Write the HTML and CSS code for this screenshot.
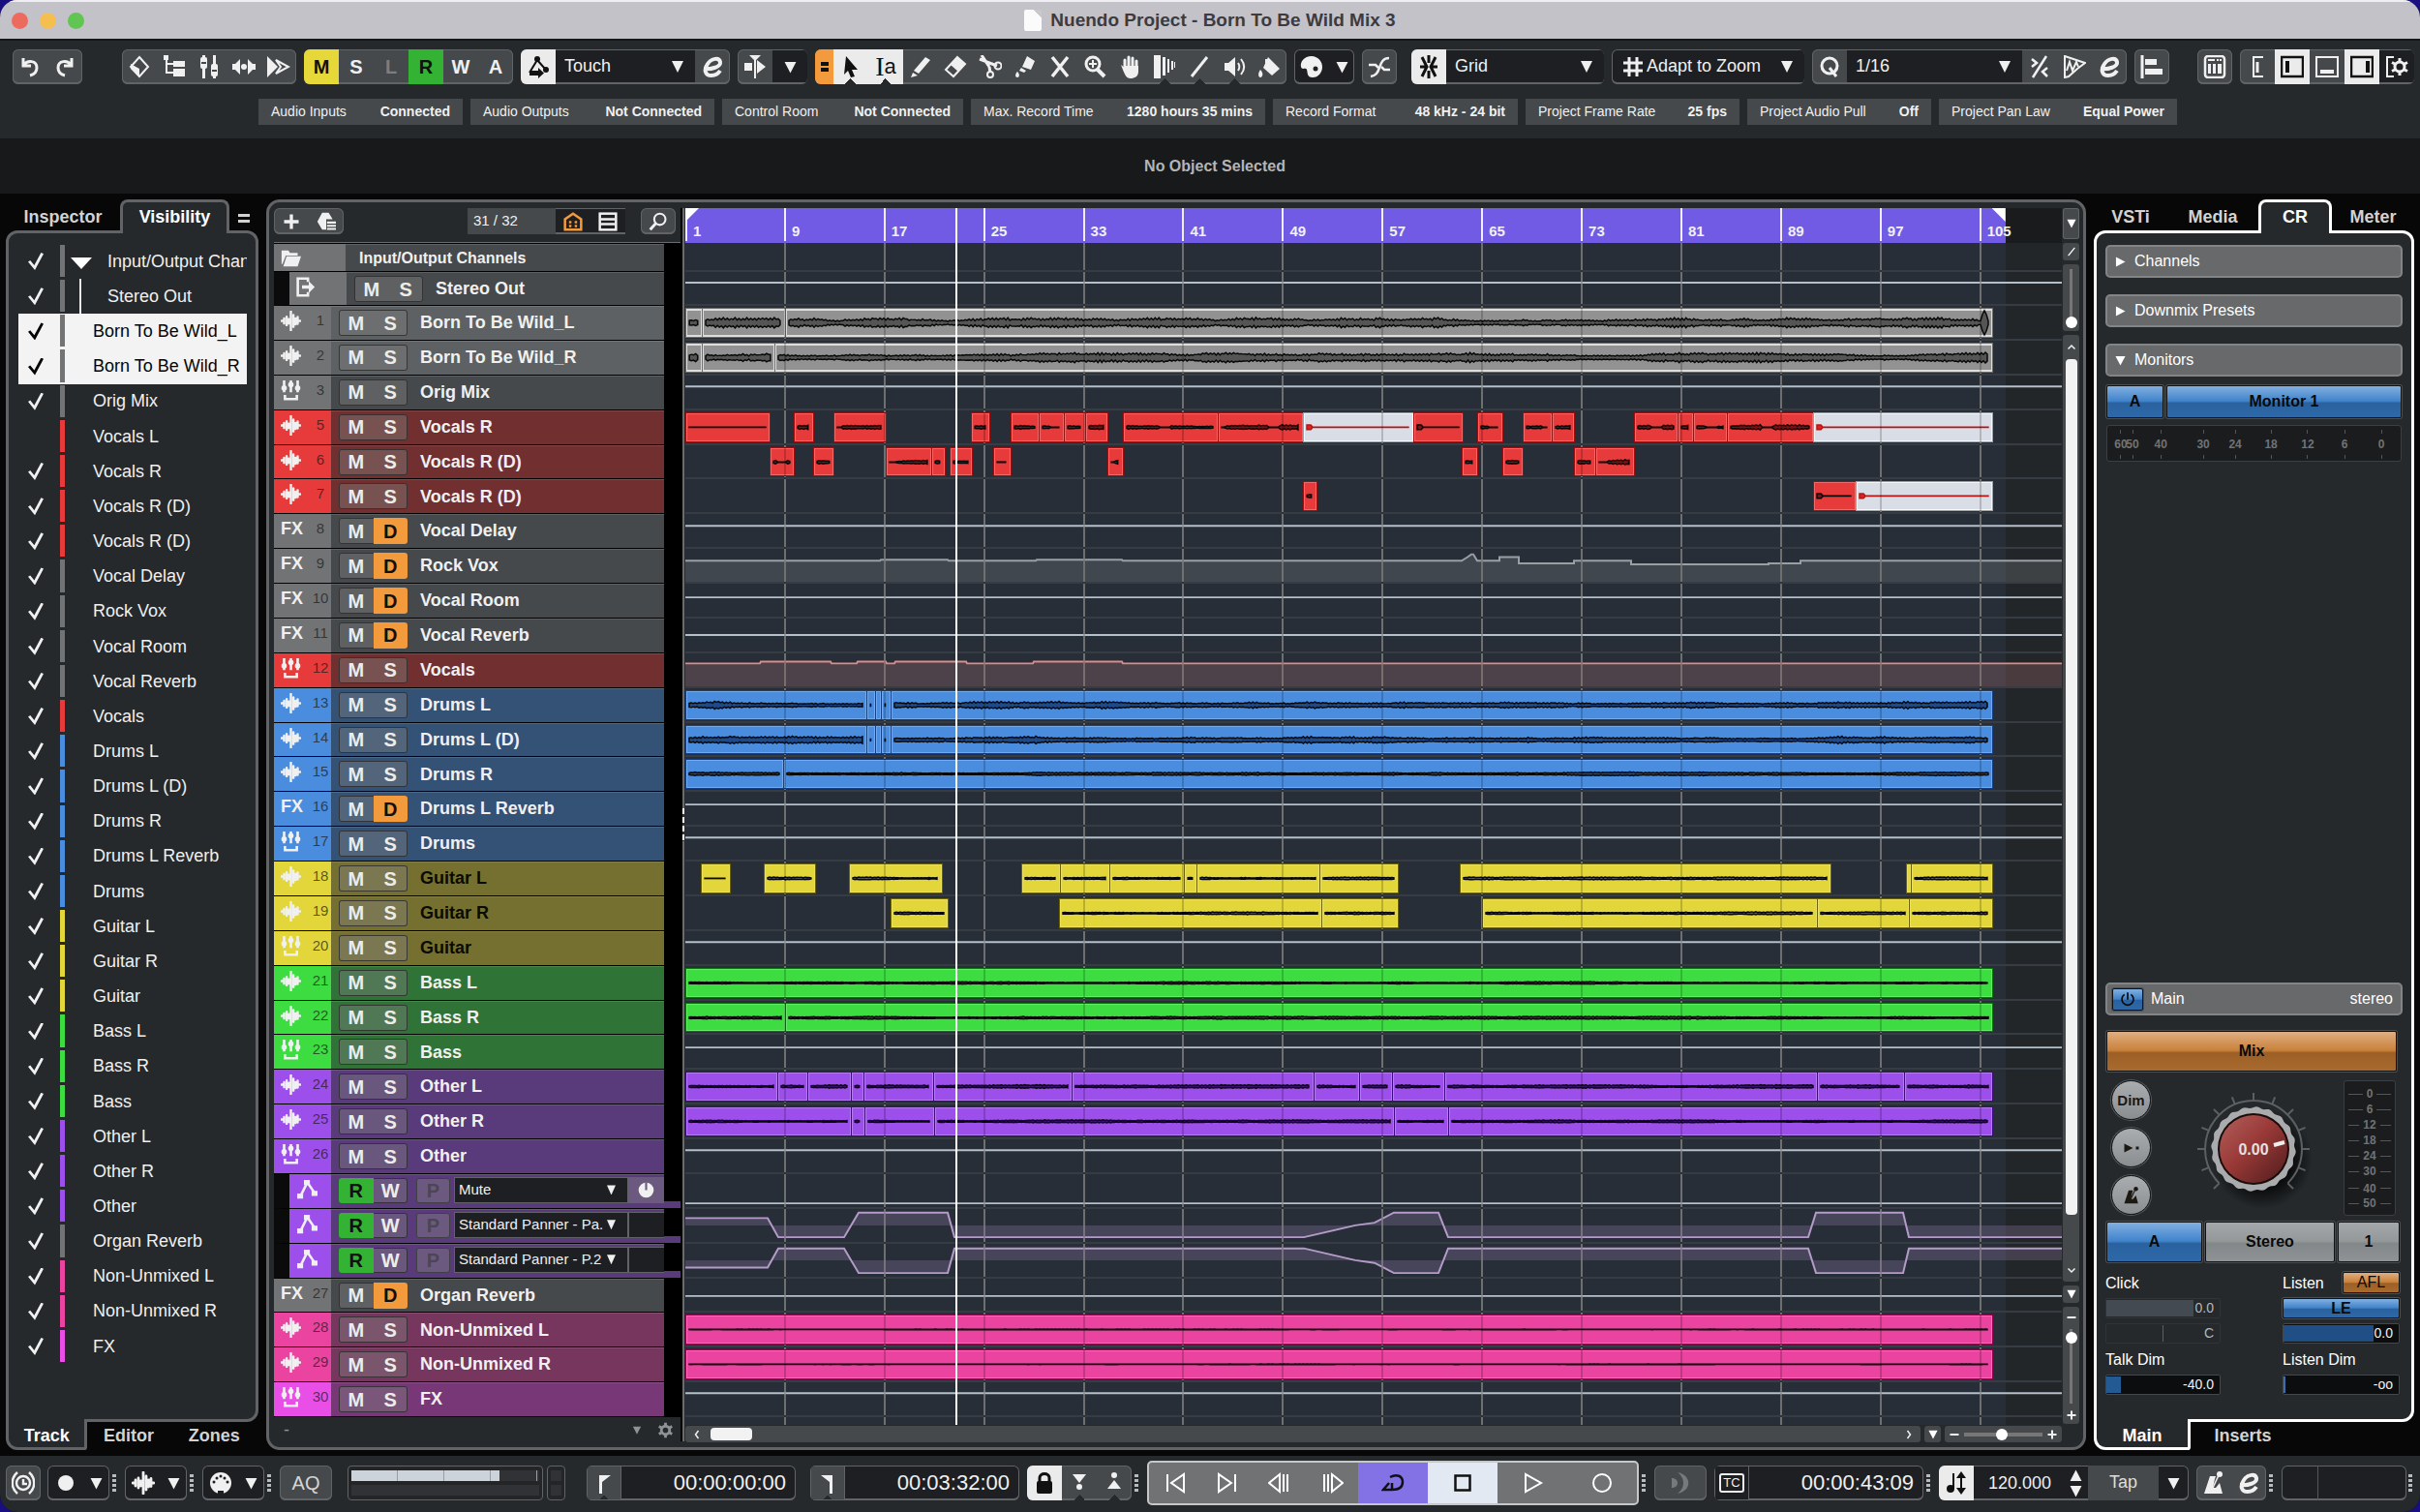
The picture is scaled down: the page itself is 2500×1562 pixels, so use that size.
FILE: index.html
```html
<!DOCTYPE html>
<html lang="en">
<head>
<meta charset="utf-8">
<title>Nuendo Project - Born To Be Wild Mix 3</title>
<link rel="stylesheet" href="styles.css">
</head>
<body>
<svg class="sprite" aria-hidden="true">
  <symbol id="i-undo" viewBox="0 0 24 24"><path d="M5 3v8h8M6 10C9 5 19 5 19 13c0 5-3 7-7 8" fill="none" stroke="currentColor" stroke-width="3"/></symbol>
  <symbol id="i-redo" viewBox="0 0 24 24"><path d="M19 3v8h-8M18 10C15 5 5 5 5 13c0 5 3 7 7 8" fill="none" stroke="currentColor" stroke-width="3"/></symbol>
  <symbol id="i-delay" viewBox="0 0 24 24"><path d="M12 2l9 10-9 10-9-10z" fill="none" stroke="currentColor" stroke-width="2"/><path d="M3 9l9 5v9L3 14z" fill="currentColor"/></symbol>
  <symbol id="i-tree" viewBox="0 0 24 24"><path d="M1 0h5v5H1zM11 6h12v6H11zM11 14h12v8H11z" fill="currentColor"/><path d="M4 3v15h8M4 9h8" fill="none" stroke="currentColor" stroke-width="2"/></symbol>
  <symbol id="i-mixer" viewBox="0 0 24 24"><path d="M5 0h3v24H5zM16 0h3v24h-3z" fill="currentColor"/><rect x="3" y="2" width="7" height="12" rx="2" fill="currentColor"/><rect x="14" y="9" width="7" height="13" rx="2" fill="currentColor"/><path d="M4 8h5M15 16h5" stroke="#45494b" stroke-width="2"/></symbol>
  <symbol id="i-center" viewBox="0 0 24 24"><path d="M-1 9h4l5-5v16l-5-5h-4zM25 9h-4l-5-5v16l5-5h4z" fill="currentColor"/><circle cx="12" cy="12" r="3" fill="currentColor"/></symbol>
  <symbol id="i-ff" viewBox="0 0 24 24"><path d="M0 1l11 11L0 23z" fill="currentColor"/><path d="M9 5l13 7-13 7 5-7z" fill="none" stroke="currentColor" stroke-width="2"/></symbol>
  <symbol id="i-autom" viewBox="0 0 24 24"><path d="M3 18L11 5l8 9" fill="none" stroke="currentColor" stroke-width="2"/><circle cx="11" cy="4" r="3" fill="currentColor"/><circle cx="20" cy="15" r="3" fill="currentColor"/><path d="M3 16h9v-3l6 5.500-6 5.500v-3H3z" fill="currentColor"/></symbol>
  <symbol id="i-edit" viewBox="0 0 24 24"><path d="M3 14c8 1 18-2 17-7-1-5-9-4-13 2-4 6-3 12 4 12 4 0 7-2 9-5" fill="none" stroke="currentColor" stroke-width="4"/></symbol>
  <symbol id="i-scroll" viewBox="0 0 24 24"><path d="M1 8h8v8H1zM14 5l9 7-9 7zM6 0h12l-6 6z" fill="currentColor"/><path d="M12 0v24" stroke="currentColor" stroke-width="2"/></symbol>
  <symbol id="i-arrow" viewBox="0 0 24 24"><path d="M7 1l12 14h-6l3 7-4 1-3-7-4 4z" fill="currentColor"/></symbol>
  <symbol id="i-pencil" viewBox="0 0 24 24"><path d="M17 2l5 3L10 19l-5-3zM4 18l5 3-7 2z" fill="currentColor"/></symbol>
  <symbol id="i-erase" viewBox="0 0 24 24"><path d="M14 2l8 7L10 22 2 15z" fill="none" stroke="currentColor" stroke-width="2"/><path d="M14 2l8 7-7 8-8-7z" fill="currentColor"/></symbol>
  <symbol id="i-scissors" viewBox="0 0 24 24"><path d="M3 0l8 12M1 4l18 7M11 12l1 6" stroke="currentColor" stroke-width="3"/><circle cx="20" cy="11" r="3.500" fill="none" stroke="currentColor" stroke-width="2"/><circle cx="12" cy="20" r="3" fill="none" stroke="currentColor" stroke-width="2"/></symbol>
  <symbol id="i-glue" viewBox="0 0 24 24"><path d="M14 1l8 5-4 9-9-3zM8 13l5 3-2 2-5-2zM4 17c3 3 2 6 0 6s-3-3 0-6z" fill="currentColor"/></symbol>
  <symbol id="i-x" viewBox="0 0 24 24"><path d="M4 2l16 20M20 2L4 22" stroke="currentColor" stroke-width="3.500"/></symbol>
  <symbol id="i-zoom" viewBox="0 0 24 24"><circle cx="10" cy="9" r="7" fill="none" stroke="currentColor" stroke-width="3"/><path d="M15 15l7 7" stroke="currentColor" stroke-width="4"/><path d="M6 9h8M10 5v8" stroke="currentColor" stroke-width="2"/></symbol>
  <symbol id="i-hand" viewBox="0 0 24 24"><path d="M7 13V5M11 12V2M15 12V3M19 13V6" stroke="currentColor" stroke-width="3" stroke-linecap="round"/><path d="M3 10l4 3V11h14v6c0 5-4 7-8 7-5 0-6-4-10-14z" fill="currentColor"/></symbol>
  <symbol id="i-comp" viewBox="0 0 24 24"><path d="M1 0h7v24H1zM10 2h3v19h-3zM15 4h2v14h-2zM19 6h2v9h-2zM22 7h1v6h-1z" fill="currentColor"/></symbol>
  <symbol id="i-line" viewBox="0 0 24 24"><path d="M4 22L20 2" stroke="currentColor" stroke-width="3"/></symbol>
  <symbol id="i-speaker" viewBox="0 0 24 24"><path d="M2 8h4l7-6v20l-7-6H2z" fill="currentColor"/><path d="M16 8c2 3 2 5 0 8M19 4c4 5 4 11 0 16" fill="none" stroke="currentColor" stroke-width="2"/></symbol>
  <symbol id="i-fill" viewBox="0 0 24 24"><path d="M11 2l12 12-8 7-9-8z" fill="currentColor"/><path d="M9 4v8" stroke="currentColor" stroke-width="2"/><path d="M3 15c4 4 2 8 0 8s-3-4 0-8z" fill="currentColor"/></symbol>
  <symbol id="i-palette" viewBox="0 0 24 24"><path d="M12 1C4 1 0 7 1 12c1 4 5 0 6 3s0 8 6 8c6 0 10-5 10-11S18 1 12 1z" fill="currentColor"/><circle cx="16" cy="14" r="2.500" fill="#1d1f22"/></symbol>
  <symbol id="i-xfade" viewBox="0 0 24 24"><path d="M3 22c5-1 7-3 9-9s4-10 10-10" fill="none" stroke="currentColor" stroke-width="2.500"/><path d="M1 10h7l3 3M23 15h-6l-3-3" stroke="currentColor" stroke-width="2.500" fill="none"/></symbol>
  <symbol id="i-snap" viewBox="0 0 24 24"><path d="M5 2l5 10-5 10M19 2l-5 10 5 10M12 0v8M12 16v8M3 12h6M15 12h6" fill="none" stroke="currentColor" stroke-width="3"/></symbol>
  <symbol id="i-hash" viewBox="0 0 24 24"><path d="M8 2v20M16 2v20M2 8h20M2 16h20" stroke="currentColor" stroke-width="3"/></symbol>
  <symbol id="i-q" viewBox="0 0 24 24"><circle cx="12" cy="11" r="8" fill="none" stroke="currentColor" stroke-width="3"/><path d="M12 13l7 9" stroke="currentColor" stroke-width="3"/></symbol>
  <symbol id="i-iq" viewBox="0 0 24 24"><path d="M19 1L5 23M4 4l5 4-5 4M20 13l-5 4 5 5" fill="none" stroke="currentColor" stroke-width="2.500"/></symbol>
  <symbol id="i-aq" viewBox="0 0 24 24"><path d="M2 1l21 7-8 6-9 8-4 1z" fill="none" stroke="currentColor" stroke-width="2"/><path d="M4 16l3-9 3 9 4-9 2 5" fill="none" stroke="currentColor" stroke-width="2"/></symbol>
  <symbol id="i-align" viewBox="0 0 24 24"><path d="M2 0v24" stroke="currentColor" stroke-width="3"/><path d="M5 4h12v6H5zM5 14h18v6H5z" fill="currentColor"/></symbol>
  <symbol id="i-keys" viewBox="0 0 24 24"><rect x="2" y="1" width="20" height="22" rx="3" fill="none" stroke="currentColor" stroke-width="2.500"/><path d="M5 9h3v10H5zM10 9h3v10h-3zM15 9h4v10h-4zM5 4h7v2H5zM14 4h2v2h-2zM17 4h2v2h-2z" fill="currentColor"/></symbol>
  <symbol id="i-zl" viewBox="0 0 24 24"><path d="M18 2H8v20h10" fill="none" stroke="currentColor" stroke-width="2"/><path d="M12 7v11" stroke="currentColor" stroke-width="3"/></symbol>
  <symbol id="i-zleft" viewBox="0 0 24 24"><rect x="1" y="2" width="22" height="20" fill="none" stroke="currentColor" stroke-width="2.500"/><path d="M7 6v12" stroke="currentColor" stroke-width="4"/></symbol>
  <symbol id="i-zbot" viewBox="0 0 24 24"><rect x="1" y="2" width="22" height="20" fill="none" stroke="currentColor" stroke-width="2"/><path d="M5 17h14" stroke="currentColor" stroke-width="4"/></symbol>
  <symbol id="i-zright" viewBox="0 0 24 24"><rect x="1" y="2" width="22" height="20" fill="none" stroke="currentColor" stroke-width="2.500"/><path d="M18 6v12" stroke="currentColor" stroke-width="4"/></symbol>
  <symbol id="i-gear" viewBox="0 0 24 24"><circle cx="12" cy="12" r="6" fill="none" stroke="currentColor" stroke-width="4"/><path d="M12 1v4M12 19v4M2.500 6.500L6 8.500M18 15.500l3.500 2M2.500 17.500L6 15.500M18 8.500l3.500-2" stroke="currentColor" stroke-width="4"/></symbol>
  <symbol id="i-zgear" viewBox="0 0 24 24"><path d="M9 2H2v20h7" fill="none" stroke="currentColor" stroke-width="2"/><circle cx="15" cy="12" r="5" fill="none" stroke="currentColor" stroke-width="3"/><path d="M15 3v4M15 17v4M7 7.500l4 2M19 14.500l4 2M7 16.500l4-2M19 9.500l4-2" stroke="currentColor" stroke-width="3"/></symbol>
  <symbol id="i-wave" viewBox="0 0 24 24"><path d="M1 12h2M4 9v6M7 7v10M9.500 10v5M12 1v22M15 5v14M17.500 9v7M20 7.500v8M21 12h2" fill="none" stroke="currentColor" stroke-width="2.800" stroke-linecap="round"/></symbol>
  <symbol id="i-group" viewBox="0 0 24 24"><path d="M4 0v14M12 0v14M20 0v14" stroke="currentColor" stroke-width="3"/><circle cx="4" cy="9" r="3.200" fill="currentColor"/><circle cx="12" cy="5" r="3.200" fill="currentColor"/><circle cx="20" cy="9" r="3.200" fill="currentColor"/><path d="M5 17v5h14v-5" fill="none" stroke="currentColor" stroke-width="3"/></symbol>
  <symbol id="i-folder" viewBox="0 0 24 24"><path d="M1 3h8l2 3h9v3H6L2 19H1z" fill="currentColor"/><path d="M7 10h17l-4 12H3z" fill="currentColor"/></symbol>
  <symbol id="i-out" viewBox="0 0 24 24"><path d="M15 6V2H3v20h12v-4" fill="none" stroke="currentColor" stroke-width="3"/><path d="M8 10h8V5l7 7-7 7v-5H8z" fill="currentColor"/></symbol>
  <symbol id="i-curve" viewBox="0 0 24 24"><path d="M4 20L12 4l9 13" fill="none" stroke="currentColor" stroke-width="3"/><path d="M0 17h7v6H0zM8 1h7v6H8zM17 14h7v6h-7z" fill="currentColor"/></symbol>
  <symbol id="i-plus" viewBox="0 0 24 24"><path d="M12 3v18M3 12h18" stroke="currentColor" stroke-width="4"/></symbol>
  <symbol id="i-minus" viewBox="0 0 24 24"><path d="M3 12h18" stroke="currentColor" stroke-width="4"/></symbol>
  <symbol id="i-preset" viewBox="0 0 24 24"><path d="M7 1h8l5 8h-8v13H7L1 12z" fill="currentColor"/><path d="M13 13h11M13 17h11M13 21h11" stroke="currentColor" stroke-width="2.500"/></symbol>
  <symbol id="i-home" viewBox="0 0 24 24"><path d="M2 22V9l10-7 10 7v13z" fill="none" stroke="currentColor" stroke-width="3"/><path d="M7 11h3v3H7zM14 11h3v3h-3zM7 16h3v3H7zM14 16h3v3h-3z" fill="currentColor"/></symbol>
  <symbol id="i-list" viewBox="0 0 24 24"><rect x="2" y="2" width="20" height="20" fill="none" stroke="currentColor" stroke-width="3"/><path d="M3 9h18M3 15h18" stroke="currentColor" stroke-width="3"/></symbol>
  <symbol id="i-search" viewBox="0 0 24 24"><circle cx="14" cy="9" r="7" fill="none" stroke="currentColor" stroke-width="2.500"/><path d="M9 14l-7 8" stroke="currentColor" stroke-width="3.500"/></symbol>
  <symbol id="i-power" viewBox="0 0 24 24"><path d="M7 5a9 9 0 1 0 10 0M12 2v11" fill="none" stroke="currentColor" stroke-width="2.500"/></symbol>
  <symbol id="i-metro" viewBox="0 0 24 24"><path d="M8 5h6l-1 3-2 9h3l4-5 3 11H2z" fill="currentColor"/><path d="M11 17l6-13" stroke="currentColor" stroke-width="1.500"/><circle cx="18" cy="3" r="3" fill="currentColor"/></symbol>
  <symbol id="i-ref" viewBox="0 0 24 24"><path d="M2 6l12 6-12 6zM18 10h4v4h-4z" fill="currentColor"/></symbol>
  <symbol id="i-mute" viewBox="0 0 24 24"><circle cx="12" cy="12" r="11" fill="currentColor"/><path d="M12 1v11" stroke="#6b5980" stroke-width="3"/></symbol>
  <symbol id="i-clock" viewBox="0 0 24 24"><circle cx="12" cy="12" r="7" fill="none" stroke="currentColor" stroke-width="2.500"/><path d="M12 8v5h4M6 1C-1 7-1 17 6 23M18 1c7 6 7 16 0 22" fill="none" stroke="currentColor" stroke-width="2.500"/></symbol>
  <symbol id="i-dot" viewBox="0 0 24 24"><circle cx="12" cy="12" r="8" fill="currentColor"/></symbol>
  <symbol id="i-midi" viewBox="0 0 24 24"><circle cx="12" cy="12" r="11" fill="currentColor"/><g fill="#1d1f22"><circle cx="5" cy="11" r="1.500"/><circle cx="8" cy="7" r="1.500"/><circle cx="12" cy="5" r="1.500"/><circle cx="16" cy="7" r="1.500"/><circle cx="19" cy="11" r="1.500"/><path d="M9 20h6v4H9z"/></g></symbol>
  <symbol id="i-locl" viewBox="0 0 24 24"><path d="M7 4h12L10 11v12H7z" fill="currentColor"/></symbol>
  <symbol id="i-locr" viewBox="0 0 24 24"><path d="M17 4H5l9 7v12h3z" fill="currentColor"/></symbol>
  <symbol id="i-lock" viewBox="0 0 24 24"><rect x="4" y="10" width="16" height="13" rx="2" fill="currentColor"/><path d="M7 11V7c0-6 10-6 10 0v4" fill="none" stroke="currentColor" stroke-width="3"/></symbol>
  <symbol id="i-pin" viewBox="0 0 24 24"><path d="M5 3h14l-7 9z" fill="currentColor"/><circle cx="12" cy="16" r="3" fill="currentColor"/></symbol>
  <symbol id="i-pout" viewBox="0 0 24 24"><path d="M5 18h14l-7-9z" fill="currentColor"/><circle cx="12" cy="4" r="3" fill="currentColor"/></symbol>
  <symbol id="i-start" viewBox="0 0 24 24"><path d="M4 3v18M21 3v18L8 12z" fill="none" stroke="currentColor" stroke-width="2"/></symbol>
  <symbol id="i-end" viewBox="0 0 24 24"><path d="M20 3v18M3 3v18l13-9z" fill="none" stroke="currentColor" stroke-width="2"/></symbol>
  <symbol id="i-rew" viewBox="0 0 24 24"><path d="M12 3v18L1 12zM16 3v18M20 3v18" fill="none" stroke="currentColor" stroke-width="2"/></symbol>
  <symbol id="i-fwd" viewBox="0 0 24 24"><path d="M12 3v18l11-9zM4 3v18M8 3v18" fill="none" stroke="currentColor" stroke-width="2"/></symbol>
  <symbol id="i-cycle" viewBox="0 0 24 24"><path d="M9 6c7-4 13-1 13 5s-5 8-11 8H1M8 12l-6 7h9v-7" fill="none" stroke="currentColor" stroke-width="2.500"/></symbol>
  <symbol id="i-stop" viewBox="0 0 24 24"><rect x="3" y="3" width="18" height="18" fill="none" stroke="currentColor" stroke-width="3"/></symbol>
  <symbol id="i-play" viewBox="0 0 24 24"><path d="M5 3v18l16-9z" fill="none" stroke="currentColor" stroke-width="2"/></symbol>
  <symbol id="i-rec" viewBox="0 0 24 24"><circle cx="12" cy="12" r="9" fill="none" stroke="currentColor" stroke-width="2"/></symbol>
  <symbol id="i-ext" viewBox="0 0 24 24"><path d="M3 7c8 0 8 10 0 10zM9 1c15 3 15 19 0 22 8-6 8-16 0-22z" fill="currentColor"/></symbol>
  <symbol id="i-tempo" viewBox="0 0 24 24"><circle cx="6" cy="18" r="4" fill="currentColor"/><path d="M9 18V2M17 4v16" stroke="currentColor" stroke-width="2"/><path d="M12 7l5-7 5 7zM12 17l5 7 5-7z" fill="currentColor"/></symbol>
  <symbol id="i-up" viewBox="0 0 24 24"><path d="M5 15l7-7 7 7" fill="none" stroke="currentColor" stroke-width="3"/></symbol>
  <symbol id="i-down" viewBox="0 0 24 24"><path d="M5 9l7 7 7-7" fill="none" stroke="currentColor" stroke-width="3"/></symbol>
  <symbol id="i-left" viewBox="0 0 24 24"><path d="M15 4l-6 8 6 8" fill="none" stroke="currentColor" stroke-width="3"/></symbol>
  <symbol id="i-right" viewBox="0 0 24 24"><path d="M9 4l6 8-6 8" fill="none" stroke="currentColor" stroke-width="3"/></symbol>
  <symbol id="i-tri" viewBox="0 0 24 24"><path d="M1 2h22L12 23z" fill="currentColor"/></symbol>
</svg>

<div class="app">
  <header class="titlebar">
    <div class="lights"><i class="light close"></i><i class="light min"></i><i class="light max"></i></div>
    <h1 class="title"><i class="doc"></i>Nuendo Project - Born To Be Wild Mix 3</h1>
  </header>

  <div class="toolbar">
    <div class="tools">
      <div class="grp"><button class="tb" aria-label="Undo"><svg><use href="#i-undo"/></svg></button><button class="tb" aria-label="Redo"><svg><use href="#i-redo"/></svg></button></div>
      <div class="tools-main">
        <div class="grp"><button class="tb"><svg><use href="#i-delay"/></svg></button><button class="tb"><svg><use href="#i-tree"/></svg></button><button class="tb"><svg><use href="#i-mixer"/></svg></button><button class="tb"><svg><use href="#i-center"/></svg></button><button class="tb"><svg><use href="#i-ff"/></svg></button></div>
        <div class="grp"><button class="tb letter yellow">M</button><button class="tb letter">S</button><button class="tb letter off">L</button><button class="tb letter green">R</button><button class="tb letter">W</button><button class="tb letter">A</button></div>
        <div class="grp"><button class="tb on"><svg><use href="#i-autom"/></svg></button><div class="sel w-touch"><select aria-label="Automation mode"><option>Touch</option></select></div><button class="tb"><svg><use href="#i-edit"/></svg></button></div>
        <div class="grp"><button class="tb"><svg><use href="#i-scroll"/></svg></button><button class="tb dark"><svg class="tri"><use href="#i-tri"/></svg></button></div>
        <div class="grp"><button class="tb eq" aria-label="Combine tools"><i></i></button><button class="tb on notch"><svg><use href="#i-arrow"/></svg></button><button class="tb on range notch" aria-label="Range"><span class="serif">I</span>a</button><button class="tb"><svg><use href="#i-pencil"/></svg></button><button class="tb"><svg><use href="#i-erase"/></svg></button><button class="tb"><svg><use href="#i-scissors"/></svg></button><button class="tb"><svg><use href="#i-glue"/></svg></button><button class="tb"><svg><use href="#i-x"/></svg></button><button class="tb"><svg><use href="#i-zoom"/></svg></button><button class="tb"><svg><use href="#i-hand"/></svg></button><button class="tb notch"><svg><use href="#i-comp"/></svg></button><button class="tb notch"><svg><use href="#i-line"/></svg></button><button class="tb notch"><svg><use href="#i-speaker"/></svg></button><button class="tb"><svg><use href="#i-fill"/></svg></button></div>
        <div class="grp dark"><button class="tb"><svg><use href="#i-palette"/></svg></button><button class="tb slim"><svg class="tri"><use href="#i-tri"/></svg></button></div>
        <div class="grp"><button class="tb"><svg><use href="#i-xfade"/></svg></button></div>
        <div class="grp snap"><button class="tb on"><svg><use href="#i-snap"/></svg></button><div class="sel w-grid"><select aria-label="Snap type"><option>Grid</option></select></div></div>
        <div class="grp dark"><span class="tb lead"><svg><use href="#i-hash"/></svg></span><div class="sel w-adapt"><select aria-label="Grid type"><option>Adapt to Zoom</option></select></div></div>
        <div class="grp"><button class="tb"><svg><use href="#i-q"/></svg></button><div class="sel w-quant"><select aria-label="Quantize"><option>1/16</option></select></div><button class="tb"><svg><use href="#i-iq"/></svg></button><button class="tb"><svg><use href="#i-aq"/></svg></button><button class="tb"><svg><use href="#i-edit"/></svg></button></div>
        <div class="grp"><button class="tb"><svg><use href="#i-align"/></svg></button></div>
      </div>
      <div class="tools-end">
        <div class="grp"><button class="tb"><svg><use href="#i-keys"/></svg></button></div>
        <div class="grp"><button class="tb"><svg><use href="#i-zl"/></svg></button><button class="tb on"><svg><use href="#i-zleft"/></svg></button><button class="tb"><svg><use href="#i-zbot"/></svg></button><button class="tb on"><svg><use href="#i-zright"/></svg></button><button class="tb dark"><svg><use href="#i-zgear"/></svg></button></div>
      </div>
    </div>
    <dl class="status">
      <div><dt>Audio Inputs</dt><dd>Connected</dd></div>
      <div><dt>Audio Outputs</dt><dd>Not Connected</dd></div>
      <div><dt>Control Room</dt><dd>Not Connected</dd></div>
      <div><dt>Max. Record Time</dt><dd>1280 hours 35 mins</dd></div>
      <div><dt>Record Format</dt><dd>48 kHz - 24 bit</dd></div>
      <div><dt>Project Frame Rate</dt><dd>25 fps</dd></div>
      <div><dt>Project Audio Pull</dt><dd>Off</dd></div>
      <div><dt>Project Pan Law</dt><dd>Equal Power</dd></div>
    </dl>
  </div>
  <div class="infoline">No Object Selected</div>

  <main class="workspace">
    <aside class="side left">
      <nav class="tabs"><button class="tab t-insp">Inspector</button><button class="tab t-vis active">Visibility</button><button class="tab t-menu" aria-label="Menu"><i></i></button></nav>
      <div class="panel"><ul class="vis" id="vis"></ul></div>
      <nav class="tabs bottom"><button class="tab t-track active">Track</button><button class="tab t-editor">Editor</button><button class="tab t-zones">Zones</button></nav>
    </aside>

    <section class="project">
      <div class="list">
        <div class="list-head">
          <div class="grp small"><button class="tb"><svg><use href="#i-plus"/></svg></button><button class="tb"><svg><use href="#i-preset"/></svg></button></div>
          <div class="counter"><span>31 / 32</span><button class="tb dark orange"><svg><use href="#i-home"/></svg></button><button class="tb dark"><svg><use href="#i-list"/></svg></button></div>
          <div class="grp small"><button class="tb"><svg><use href="#i-search"/></svg></button></div>
        </div>
        <div class="rows" id="rows"></div>
        <div class="list-foot"><span>-</span><svg class="tri"><use href="#i-tri"/></svg><svg><use href="#i-gear"/></svg></div>
      </div>
      <div class="divider"><i></i></div>
      <div class="timeline">
        <div class="ruler" id="ruler"></div>
        <div class="lanes" id="lanes"></div>
        <div class="hbar">
          <div class="htrack"><svg><use href="#i-left"/></svg><i class="hthumb"></i><svg class="end"><use href="#i-right"/></svg></div>
          <button class="mini"><svg><use href="#i-tri"/></svg></button>
          <div class="hzoom"><svg><use href="#i-minus"/></svg><input type="range" aria-label="Horizontal zoom" value="48"><svg><use href="#i-plus"/></svg></div>
        </div>
      </div>
      <div class="vbar">
        <button class="mini tall"><svg><use href="#i-tri"/></svg></button>
        <button class="mini"><svg><use href="#i-line"/></svg></button>
        <div class="vzoom top"><input type="range" aria-label="Waveform zoom" value="0"></div>
        <div class="vtrack"><svg><use href="#i-up"/></svg><i class="vthumb"></i><svg><use href="#i-down"/></svg></div>
        <button class="mini"><svg><use href="#i-tri"/></svg></button>
        <div class="vzoom"><svg><use href="#i-minus"/></svg><input type="range" aria-label="Vertical zoom" value="96"><svg><use href="#i-plus"/></svg></div>
      </div>
    </section>

    <aside class="side right">
      <nav class="tabs"><button class="tab r-vsti">VSTi</button><button class="tab r-media">Media</button><button class="tab r-cr active">CR</button><button class="tab r-meter">Meter</button></nav>
      <div class="panel cr">
        <button class="head"><svg class="tri side-tri"><use href="#i-tri"/></svg>Channels</button>
        <button class="head"><svg class="tri side-tri"><use href="#i-tri"/></svg>Downmix Presets</button>
        <button class="head"><svg class="tri"><use href="#i-tri"/></svg>Monitors</button>
        <div class="monitor"><button class="glossy blue">A</button><button class="glossy blue">Monitor 1</button></div>
        <div class="scale" id="scale"></div>
        <div class="grow"></div>
        <div class="head main"><button class="glossy blue power" aria-label="Power"><svg><use href="#i-power"/></svg></button><span>Main</span><span class="fmt">stereo</span></div>
        <button class="glossy amber mix">Mix</button>
        <div class="knobrow">
          <div class="rounds"><button class="round">Dim</button><button class="round"><svg><use href="#i-ref"/></svg></button><button class="round"><svg><use href="#i-metro"/></svg></button></div>
          <svg class="knob" viewBox="0 0 130 130" id="knob" role="img" aria-label="Control room level"></svg>
          <ul class="vmeter"><li>0</li><li>6</li><li>12</li><li>18</li><li>24</li><li>30</li><li class="wide">40</li><li>50</li></ul>
        </div>
        <div class="speakers"><button class="glossy blue">A</button><button class="glossy grey">Stereo</button><button class="glossy grey">1</button></div>
        <div class="levels">
          <div class="lv">
            <label class="cap" for="click">Click</label>
            <div class="val dim"><input type="range" id="click" value="78" class="f-click"><output>0.0</output></div>
            <div class="val dim"><input type="range" aria-label="Click pan" value="50" class="f-pan"><output>C</output></div>
            <label class="cap" for="talk">Talk Dim</label>
            <div class="val"><input type="range" id="talk" value="12" class="f-talk"><output>-40.0</output></div>
          </div>
          <div class="lv">
            <div class="caprow"><label class="cap" for="listen">Listen</label><button class="glossy amber afl">AFL</button></div>
            <button class="glossy blue le">LE</button>
            <div class="val"><input type="range" id="listen" value="78" class="f-listen"><output>0.0</output></div>
            <label class="cap" for="ldim">Listen Dim</label>
            <div class="val"><input type="range" id="ldim" value="0" class="f-ldim"><output>-oo</output></div>
          </div>
        </div>
      </div>
      <nav class="tabs bottom"><button class="tab r-main active">Main</button><button class="tab r-ins">Inserts</button></nav>
    </aside>
  </main>

  <footer class="transport">
    <div class="tsec">
      <div class="grp m7"><button class="tb"><svg><use href="#i-clock"/></svg></button></div>
      <div class="grp dark pair"><button class="tb"><svg><use href="#i-dot"/></svg></button><button class="tb slim"><svg class="tri"><use href="#i-tri"/></svg></button></div><i class="grip"></i>
      <div class="grp dark pair"><button class="tb"><svg><use href="#i-wave"/></svg></button><button class="tb slim"><svg class="tri"><use href="#i-tri"/></svg></button></div><i class="grip"></i>
      <div class="grp dark pair"><button class="tb"><svg><use href="#i-midi"/></svg></button><button class="tb slim"><svg class="tri"><use href="#i-tri"/></svg></button></div><i class="grip"></i>
      <div class="grp m16"><button class="tb aq">AQ</button></div>
      <div class="perf"><i class="hot"></i><i></i></div>
      <div class="perf clipping"><i></i><i></i></div>
    </div>
    <div class="tsec">
      <div class="grp loc m15"><button class="tb notch"><svg><use href="#i-locl"/></svg></button><span class="time">00:00:00:00</span></div>
      <div class="grp loc m8"><button class="tb notch"><svg><use href="#i-locr"/></svg></button><span class="time">00:03:32:00</span></div>
      <div class="grp"><button class="tb on"><svg><use href="#i-lock"/></svg></button><button class="tb notch"><svg><use href="#i-pin"/></svg></button><button class="tb notch"><svg><use href="#i-pout"/></svg></button></div><i class="grip"></i>
      <div class="play">
        <button aria-label="Go to start"><svg><use href="#i-start"/></svg></button><button aria-label="Go to end"><svg><use href="#i-end"/></svg></button><button aria-label="Rewind"><svg><use href="#i-rew"/></svg></button><button aria-label="Forward"><svg><use href="#i-fwd"/></svg></button><button class="wide cycle" aria-label="Cycle"><svg><use href="#i-cycle"/></svg></button><button class="wide stop" aria-label="Stop"><svg><use href="#i-stop"/></svg></button><button class="wide" aria-label="Play"><svg><use href="#i-play"/></svg></button><button class="wide" aria-label="Record"><svg><use href="#i-rec"/></svg></button>
      </div><i class="grip"></i>
      <div class="grp m8"><button class="tb ext"><svg><use href="#i-ext"/></svg></button></div>
      <div class="grp loc"><button class="tb dark"><span class="tc">TC</span></button><span class="time">00:00:43:09</span></div><i class="grip"></i>
      <div class="grp dark tempo m8"><button class="tb on"><svg><use href="#i-tempo"/></svg></button><span class="bpm">120.000</span><span class="spin"><svg class="flip"><use href="#i-tri"/></svg><svg><use href="#i-tri"/></svg></span><button class="tap">Tap</button><button class="tb slim"><svg class="tri"><use href="#i-tri"/></svg></button></div>
      <div class="grp"><button class="tb"><svg><use href="#i-metro"/></svg></button><button class="tb"><svg><use href="#i-edit"/></svg></button></div><i class="grip"></i>
      <div class="grp dark outbox"><i></i></div><i class="grip last"></i>
    </div>
  </footer>
</div>
<script src="app.js"></script>
</body>
</html>
```

FILE: styles.css
```css
:root {
  --panel: #25292c;
  --btn: #45494b;
  --edge: #616366;
  --dark: #1d1f22;
  --ink: #f0f0f0;
  --c-gray: #727375; --r-gray: #45494b;
  --c-red: #e73a3a; --r-red: #722f30;
  --c-blue: #4a8cde; --r-blue: #335275;
  --c-yellow: #e2d63a; --r-yellow: #767030;
  --c-green: #3ddd42; --r-green: #2f7336;
  --c-purple: #9d4fec; --r-purple: #593a7a;
  --c-pink: #ea44a0; --r-pink: #76365d;
  --c-magenta: #e94fe6; --r-magenta: #783878;
}
* { box-sizing: border-box; }
body { margin: 0; background: #1a0f80; color: var(--ink); font: 18px/1.2 "Liberation Sans", Arial, sans-serif; }
button, select, input { font: inherit; color: inherit; }
button { border: 0; padding: 0; background: none; cursor: pointer; }
ul, dl, dd, h1 { margin: 0; padding: 0; list-style: none; }
i { font-style: normal; }
svg { display: block; width: 24px; height: 24px; flex: none; }
.sprite { display: none; }
.app { min-height: 100vh; display: flex; flex-direction: column; background: #070707; border-radius: 18px; overflow: hidden; }

/* title bar */
.titlebar { height: 42px; flex: none; display: grid; grid-template-columns: 1fr auto 1fr; align-items: center; background: #c4c2c9; border-top: 2px solid #efeef2; border-bottom: 2px solid #151617; }
.lights { display: flex; gap: 12px; padding-left: 12px; }
.light { width: 17px; height: 17px; border-radius: 50%; }
.close { background: #ed6a5e; } .min { background: #f5bf4f; } .max { background: #61c554; }
.title { display: flex; align-items: center; gap: 9px; font-size: 19px; font-weight: 700; color: #3c3b3f; }
.doc { width: 18px; height: 22px; background: linear-gradient(225deg, #c9c9c9 6px, #fbfbfb 6px); border-radius: 2px; }

/* toolbar */
.toolbar { flex: none; height: 101px; background: var(--panel); }
.tools { display: flex; padding: 9px 6px 0 13px; }
.tools-main, .tools-end { display: flex; gap: 8px; }
.tools-main { margin-left: 41px; }
.tools-end { margin-left: auto; }
.grp { display: flex; height: 36px; flex: none; border-radius: 6px; overflow: hidden; background: var(--btn); box-shadow: inset 0 0 0 1px var(--edge), inset 0 -2px 0 var(--edge); }
.tb { width: 36px; height: 36px; flex: none; display: flex; align-items: center; justify-content: center; color: var(--ink); }
.tb.on { background-color: #ebebeb; color: #111; }
.grp.dark, .tb.dark { background: var(--dark); }
.tb.dark, .sel { box-shadow: inset 0 1px 0 var(--edge), inset 0 -2px 0 var(--edge); }
.tb.letter { font-weight: 700; font-size: 20px; }
.tb.yellow { background: #e5d838; color: #111; }
.tb.green { background: #34b233; color: #111; }
.tb.off { color: #7b7e80; }
.tb.eq { width: 19px; background: #f39a3c; }
.tb.eq i { width: 8px; height: 10px; border: solid #111; border-width: 4px 0; }
.tb.slim { width: 26px; }
.tb.range { font-size: 22px; }
.serif { font-family: "Liberation Serif", serif; font-size: 28px; }
.tb.lead { width: 34px; justify-content: flex-end; }
.tb svg.tri { width: 13px; height: 13px; }
.notch { background-image: conic-gradient(from 135deg at 50% 0, var(--panel) 90deg, transparent 0); background-size: 14px 6px; background-repeat: no-repeat; background-position: bottom center; }
.snap { margin-left: 7px; }
.sel { display: grid; grid-template-columns: 1fr 13px; align-items: center; padding-right: 11px; height: 36px; background: var(--dark); }
.sel::after { content: ""; width: 12px; height: 12px; background: var(--ink); clip-path: polygon(0 0, 100% 0, 50% 100%); grid-area: 1 / 2; pointer-events: none; }
.sel select { grid-area: 1 / 1 / 2 / 3; appearance: none; width: 100%; border: 0; background: none; padding: 0 0 0 9px; }
.w-touch { width: 144px; } .w-grid { width: 163px; } .w-adapt { width: 165px; } .w-quant { width: 181px; }
.w-adapt select { padding-left: 2px; }
.status { display: grid; grid-template-columns: 211px 252px 249px 304px 253px 221px 190px 246px; gap: 8px; justify-content: center; padding: 15px 0 0 16px; font-size: 14px; }
.status div { display: flex; justify-content: space-between; align-items: center; height: 27px; padding: 0 13px; background: var(--btn); }
.status dd { font-weight: 700; }
.infoline { flex: none; height: 57px; display: grid; place-items: center; background: #18191b; color: #b5b5b5; font-weight: 700; font-size: 16px; padding-left: 10px; }

/* workspace */
.workspace { flex: 1; min-height: 0; display: grid; grid-template-columns: 261px minmax(0, 1fr) 331px; gap: 8px; padding: 6px; }
.side { display: flex; flex-direction: column; --line: var(--edge); }
.side.right { --line: #fff; }
.tabs { display: flex; height: 35px; flex: none; margin-bottom: -3px; position: relative; }
.tab { font-weight: 700; font-size: 18px; color: #d2d2d2; border: 3px solid transparent; border-bottom: 0; border-radius: 8px 8px 0 0; text-align: center; }
.tab.active { background: var(--panel); border-color: var(--line); color: #fff; }
.tabs.bottom { height: 32px; margin: -3px 0 0; }
.tabs.bottom .tab { border: 3px solid transparent; border-top: 0; border-radius: 0 0 8px 8px; padding: 7px 0 0; }
.tabs.bottom .tab.active { border-color: var(--line); border-bottom-left-radius: 12px; border-bottom-right-radius: 3px; }
.t-insp { width: 118px; } .t-vis { width: 113px; } .t-menu { width: 30px; }
.t-menu i { display: block; width: 12px; height: 9px; margin: auto; border: solid #d2d2d2; border-width: 3px 0; }
.t-track { width: 85px; } .t-editor { width: 86px; } .t-zones { width: 92px; }
.r-vsti { width: 76px; } .r-media { width: 94px; } .r-cr { width: 76px; } .r-meter { width: 85px; }
.r-main { width: 100px; } .r-ins { width: 108px; }
.panel { flex: 1; min-height: 0; background: var(--panel); border: 3px solid var(--line); border-radius: 12px 12px 12px 0; display: flex; flex-direction: column; }

/* visibility list */
.vis { flex: 1; margin: 11px 9px 57px 10px; display: flex; flex-direction: column; overflow: hidden; }
.vis li { flex: 1 1 0; min-height: 0; display: flex; }
.vis label { flex: 1; min-width: 0; display: flex; align-items: center; white-space: nowrap; }
.vis input { appearance: none; margin: 0 0 0 10px; width: 16px; height: 18px; flex: none; }
.vis input:checked { background: currentColor; clip-path: polygon(0 52%, 14% 44%, 40% 72%, 84% 0, 100% 6%, 44% 100%); }
.vis .bar { width: 5px; align-self: stretch; margin: 1px 0 2px 17px; flex: none; background: var(--c); }
.vis .name { margin-left: 29px; padding-top: 1px; }
.vis .fold { flex: none; align-self: flex-start; margin: 14px 0 0 6px; width: 22px; height: 12px; background: #fff; clip-path: polygon(0 0, 100% 0, 50% 100%); }
.vis .fold + .name { margin-left: 16px; overflow: hidden; }
.vis .stem { flex: none; align-self: stretch; width: 2px; background: #e8e8e8; margin-left: 15px; }
.vis .stem + .name { margin-left: 27px; }
.vis .sel-row { background: #f3f3f3; color: #050505; }

/* project panel */
.project { min-width: 0; display: grid; grid-template-columns: 420px 5px minmax(0, 1fr) 18px; background: var(--panel); border: 3px solid var(--edge); border-radius: 14px; padding: 6px 4px 0 5px; }
.list, .timeline { display: flex; flex-direction: column; min-width: 0; }
.list-head { display: flex; height: 36px; flex: none; padding-right: 5px; border-bottom: 1px solid #6a6c6e; }
.grp.small { height: 27px; }
.list-head .tb { height: 27px; }
.list-head svg { width: 20px; height: 20px; }
.counter { display: flex; height: 27px; margin: 0 16px 0 auto; background: var(--btn); font-size: 15px; }
.counter span { width: 91px; padding: 4px 0 0 6px; }
.tb.orange { color: #f39a3c; }
.rows, .lanes { flex: 1; display: grid; grid-template-rows: 29px 35px repeat(32, minmax(0, 1fr)); }
.rows { background: #000; padding-top: 1px; }
.row { display: flex; min-height: 0; margin-right: 17px; background: var(--r); border-bottom: 1px solid #000; box-shadow: inset 0 1px 0 rgba(255, 255, 255, .13); }
.row .swatch { width: 59px; flex: none; display: flex; padding: 5px 0 0 7px; background: var(--c); }
.row .swatch svg { width: 21px; height: 21px; }
.row .num { margin-left: auto; width: 22px; text-align: center; font-size: 15px; color: rgba(25, 25, 25, .7); padding-top: 1px; }
.row .fx { font-weight: 700; font-size: 18px; width: 23px; }
.row .ms { display: flex; flex: none; width: 71px; height: 27px; margin: 4px 0 0 8px; border-radius: 3px; overflow: hidden; background: rgba(128, 128, 128, .42); box-shadow: inset 0 0 0 1px rgba(40, 40, 40, .8); }
.row .ms button { flex: 1; font-weight: 700; font-size: 20px; line-height: 26px; color: #ececec; }
.row .ms .d { background: #f39a3c; color: #111; }
.row .ms .r { background: #34b233; color: #111; }
.row .name { font-weight: 700; margin-left: 13px; padding-top: 1px; align-self: center; }
.row.hot { background: #5d6164; }
.row.c-yellow .name { color: #0a0a00; }
.row.header .swatch { width: 74px; padding-top: 4px; }
.row.header .name { font-size: 16px; margin-left: 14px; }
.row.sub { border-left: 16px solid #0b0b0b; }
.row.sub .swatch { padding-left: 6px; }
.row.auto { margin-right: 0; }
.row.auto .swatch { width: 43px; padding-left: 8px; }
.row.auto .ms { height: 26px; }
.row .p { width: 35px; height: 26px; margin: 4px 4px 0 9px; flex: none; border-radius: 3px; font-weight: 700; font-size: 20px; background: #6b5980; color: #4b4654; box-shadow: inset 0 0 0 1px rgba(60, 60, 60, .9); }
.row .sel { width: 180px; height: 27px; margin-top: 3px; font-size: 15px; padding-right: 9px; box-shadow: inset 0 0 0 1px var(--edge); }
.row .sel select { padding-left: 5px; }
.row .sel::after { width: 9px; height: 10px; }
.row .mutebtn { flex: 1; height: 27px; margin-top: 3px; display: grid; place-items: center; background: #6b5980; }
.row .mutebtn svg { width: 17px; height: 17px; }
.row .rest { flex: 1; height: 27px; margin-top: 3px; background: var(--dark); border: 1px solid var(--edge); border-right: 0; }
.row .edge { width: 17px; height: 28px; flex: none; background: #000; }
.list-foot { height: 31px; flex: none; display: flex; align-items: center; padding: 0 7px 4px 10px; color: #909294; }
.list-foot span { margin-right: auto; }
.list-foot svg { width: 17px; height: 17px; margin-left: 14px; }
.list-foot svg.tri { width: 14px; height: 9px; }
.divider { background: #6a6b6d; border-left: 2px solid #000; border-right: 1px solid #2b2c2e; margin-bottom: 6px; display: flex; align-items: center; }
.divider i { width: 3px; height: 34px; background: repeating-linear-gradient(#fff 0 6px, #333 6px 9px); }

/* ruler and lanes */
.ruler { height: 36px; flex: none; position: relative; background: linear-gradient(90deg, #725be4 95.9%, #1a1b1d 0); font-size: 15px; font-weight: 700; overflow: hidden; }
.ruler span { position: absolute; top: 0; height: 34px; padding: 15px 0 0 6px; border-left: 2px solid rgba(255, 255, 255, .9); }
.ruler .flag { position: absolute; top: 0; left: 0; width: 14px; height: 14px; background: #fff; clip-path: polygon(0 0, 100% 0, 0 100%); }
.ruler .flag.r { left: auto; right: 4.1%; clip-path: polygon(0 0, 100% 0, 100% 100%); }
.lanes { position: relative; padding: 1px 0 8px; background: linear-gradient(90deg, #272e37 95.9%, #232628 0); }
.lane { position: relative; min-height: 0; border-bottom: 2px solid #363c43; }
.lane > svg { position: absolute; inset: 0; width: 100%; height: 100%; }
.clip { position: absolute; top: 2px; bottom: 1px; overflow: hidden; background: var(--c); border: 1px solid var(--b); box-shadow: inset 0 0 0 1px rgba(255, 255, 255, .25); }
.clip svg { width: 100%; height: 100%; }
.clip path { fill: var(--w); stroke: #080808; stroke-width: 1.5; }
.clip.gray { --c: #929292; --b: #6c6c6c; --w: #555; box-shadow: inset 0 2px 0 #ddd, inset 0 -2px 0 #ddd, inset 1px 0 0 #ddd, inset -1px 0 0 #ddd; }
.clip.red { --b: #a10d0d; --w: #7d1010; }
.clip.white { --c: #d9dee6; --b: #9aa0a8; --w: #d22; box-shadow: inset 0 0 0 1px #f4f6f8; }
.clip.white path { stroke: #b81414; }
.clip.blue { --b: #123f86; --w: #1c4a8c; }
.clip.yellow { --b: #6d6400; --w: #6d6400; }
.clip.green { --b: #087a0c; --w: #0c5c10; }
.clip.purple { --b: #3d0a82; --w: #3a1070; }
.clip.pink { --b: #96004f; --w: #500828; }
.gl { position: absolute; top: 0; bottom: 0; width: 2px; background: rgba(140, 142, 140, .95); }
.gl.over { background: rgba(0, 0, 0, .18); }
.playhead { position: absolute; top: -36px; bottom: 0; left: 19.6%; width: 2px; background: #fff; }

/* scroll bars */
.hbar { height: 23px; flex: none; padding: 1px 0 5px; display: flex; gap: 4px; }
.hbar svg { width: 12px; height: 12px; }
.htrack { flex: 1; display: flex; align-items: center; gap: 8px; padding: 0 6px; background: var(--btn); border-radius: 3px; }
.hthumb { width: 43px; height: 13px; border-radius: 4px; background: #f2f2f2; }
.htrack .end { margin-left: auto; }
.mini { width: 17px; height: 18px; flex: none; display: grid; place-items: center; background: var(--btn); border-radius: 3px; color: #fff; }
.mini svg { width: 10px; height: 10px; }
.mini.tall { height: 32px; box-shadow: inset 0 0 0 1px var(--edge); }
.hbar .mini { height: 17px; }
.hzoom { width: 121px; display: flex; align-items: center; gap: 4px; padding: 0 4px; background: var(--btn); border-radius: 3px; }
input[type=range] { appearance: none; margin: 0; background: none; }
.hzoom input { flex: 1; min-width: 0; height: 12px; background: linear-gradient(#777, #777) center / 100% 4px no-repeat; }
.hzoom input::-webkit-slider-thumb, .vzoom input::-webkit-slider-thumb { appearance: none; width: 12px; height: 12px; border-radius: 50%; background: #fff; }
.vbar { display: flex; flex-direction: column; gap: 4px; padding-bottom: 24px; align-items: flex-end; }
.vtrack { width: 17px; flex: 1; display: flex; flex-direction: column; align-items: center; padding: 7px 0 6px; background: var(--btn); border-radius: 3px; }
.vtrack svg { width: 12px; height: 12px; }
.vthumb { width: 12px; height: 884px; margin: 6px 0 auto; flex: 0 1 auto; border-radius: 4px; background: #f2f2f2; }
.vzoom { width: 17px; height: 121px; flex: none; display: flex; flex-direction: column; align-items: center; gap: 6px; padding: 5px 0 3px; background: var(--btn); border-radius: 3px; }
.vzoom.top { height: 69px; }
.vzoom svg { width: 12px; height: 12px; }
.vzoom input { writing-mode: vertical-lr; direction: rtl; flex: 1; min-height: 0; width: 12px; background: linear-gradient(#777, #777) center / 3px 100% no-repeat; }

/* control room */
.side.right .panel { padding: 12px 9px 20px; }
.cr { font-size: 16px; }
.head { display: flex; align-items: center; gap: 9px; height: 34px; flex: none; margin-bottom: 17px; padding: 0 8px 0 8px; background: #68696a; border: 2px solid #838485; border-radius: 5px; color: #fff; text-align: left; }
.head svg.tri { width: 11px; height: 11px; }
.side-tri { transform: rotate(-90deg); }
.glossy { display: grid; place-items: center; font-weight: 700; color: #0a0a0a; border: 1px solid #101214; box-shadow: 0 0 0 1px #4c4f52; border-radius: 2px; }
.blue.glossy { background: linear-gradient(#82b0e0, #4083cb 48%, #2a629f 54%, #2e68a8); }
.amber.glossy { background: linear-gradient(#dfae82, #c9813a 48%, #9c5f26 54%, #a86a2e); }
.grey.glossy { background: linear-gradient(#a4a8ab, #949899 48%, #82878a 54%, #8f9395); }
.monitor { display: grid; grid-template-columns: 59px 1fr; gap: 3px; height: 34px; margin: -8px 1px 7px; flex: none; }
.scale { position: relative; height: 38px; flex: none; margin: 0 1px; background: #1b1c1d; border: 1px solid #3c3f42; border-radius: 3px; font-size: 12px; font-weight: 700; color: #707375; }
.scale span { position: absolute; top: 4px; width: 24px; margin-left: -12px; text-align: center; line-height: 18px; padding: 6px 0; height: 30px; background: linear-gradient(#54575a, #54575a) top / 1px 4px no-repeat, linear-gradient(#54575a, #54575a) bottom / 1px 4px no-repeat; }
.grow { flex: 1; }
.head.main { margin-bottom: 16px; padding-left: 5px; gap: 8px; }
.power { width: 32px; height: 23px; }
.power svg { width: 16px; height: 16px; }
.fmt { margin-left: auto; }
.mix { height: 42px; flex: none; margin: 0 6px 9px 1px; }
.knobrow { display: flex; justify-content: space-between; height: 140px; flex: none; margin-right: 7px; }
.rounds { display: flex; flex-direction: column; gap: 8px; padding-left: 6px; }
.round { width: 41px; height: 41px; border-radius: 50%; display: grid; place-items: center; font-weight: 700; font-size: 15px; color: #1c1812; background: linear-gradient(#a9adb0, #9a9ea1 50%, #898d90); border: 1px solid #16181a; box-shadow: 0 0 0 1px #55585b; }
.round svg { width: 18px; height: 18px; }
.knob { width: 130px; height: 130px; margin: 6px 0 0 12px; overflow: visible; }
.vmeter { width: 54px; background: #1b1c1d; border: 1px solid #3c3f42; border-radius: 3px; padding: 5px 4px; font-size: 12px; font-weight: 700; color: #707375; }
.vmeter li { display: flex; align-items: center; justify-content: center; gap: 4px; height: 16px; line-height: 16px; }
.vmeter li::before, .vmeter li::after { content: ""; flex: 1; height: 1px; background: #54575a; }
.vmeter .wide { margin-top: 2px; height: 15px; }
.speakers { display: grid; grid-template-columns: 99px 134px 1fr; gap: 3px; height: 42px; flex: none; margin: 6px 3px 0 1px; }
.levels { display: flex; justify-content: space-between; margin: 10px 3px 0 0; }
.lv { width: 121px; display: flex; flex-direction: column; }
.lv:first-child { width: 119px; }
.cap { color: #fff; height: 24px; padding-top: 2px; }
.lv .cap { margin-bottom: 3px; }
.caprow { display: flex; justify-content: space-between; }
.afl { width: 59px; height: 22px; font-weight: 400; }
.le { height: 21px; margin-bottom: 5px; }
.val { display: grid; align-items: center; height: 21px; margin-bottom: 5px; border: 1px solid #45484b; border-radius: 2px; background: #0c0d0f; }
.val.dim { background: var(--panel); border-color: #303437; }
.val input { grid-area: 1 / 1; width: 100%; height: 17px; padding: 0; }
.val input::-webkit-slider-thumb { appearance: none; width: 1px; height: 17px; }
.val output { grid-area: 1 / 1; justify-self: end; padding-right: 6px; font-size: 14px; pointer-events: none; }
.val.dim output { color: #b4b7ba; }
.val input.f-click { background: linear-gradient(90deg, #444a51 77%, transparent 0); }
.val input.f-pan { background: linear-gradient(#5a5f66, #5a5f66) center / 1px 17px no-repeat; }
.val input.f-talk { background: linear-gradient(90deg, #235a94 13%, transparent 0); }
.val input.f-listen { background: linear-gradient(90deg, #1f4f85 78%, transparent 0); }
.val input.f-ldim { background: linear-gradient(90deg, #3a6fae 2%, transparent 0); }

/* transport */
.transport { flex: none; height: 58px; display: flex; justify-content: space-between; background: var(--panel); padding: 0 8px 2px 6px; }
.tsec { display: flex; align-items: center; }
.m7 { margin-right: 7px; } .m8 { margin-right: 8px; } .m15 { margin-right: 15px; } .m16 { margin-right: 16px; }
.pair .tb { width: 37px; }
.pair .tb.slim { width: 27px; }
.tb.aq { width: 54px; font-size: 20px; color: #d5d5d5; }
.grip { width: 4px; height: 19px; margin: 0 9px 0 3px; background: repeating-linear-gradient(#b8babb 0 3px, transparent 3px 5px); }
.grip.last { margin: 0 0 0 2px; }
.perf { width: 202px; height: 36px; margin-right: 4px; padding: 4px 3px; display: flex; flex-direction: column; justify-content: space-between; background: #232527; border: 1px solid var(--edge); border-radius: 4px; }
.perf i { height: 11px; background: #303235; }
.perf .hot { background: repeating-linear-gradient(90deg, transparent 0 47px, #9a9fa6 47px 48px), linear-gradient(90deg, #cdd3db 79%, #303235 0); }
.perf.clipping { width: 19px; margin: 0; }
.loc { width: 216px; background: var(--dark); }
.loc > .tb { background-color: var(--btn); box-shadow: inset 0 0 0 1px var(--edge); }
.loc > .tb.dark { background-color: var(--dark); }
.time { flex: 1; text-align: right; padding-right: 10px; font-size: 22px; line-height: 36px; }
.play { display: flex; height: 46px; border: 2px solid #c6c7c8; border-radius: 5px; overflow: hidden; background: #717273; }
.play button { width: 54px; display: grid; place-items: center; color: #fff; }
.play button.wide { width: 72px; }
.play .cycle { background: #8372e6; color: #111; }
.play .stop { background: #e3e9f2; color: #111; }
.play .stop svg { width: 20px; height: 20px; }
.ext { width: 54px; color: #777a7c; }
.tc { font-size: 13px; line-height: 16px; border: 2px solid #eee; border-radius: 3px; padding: 0 2px; }
.bpm { width: 92px; padding-left: 15px; font-size: 18px; line-height: 36px; }
.spin { width: 26px; display: flex; flex-direction: column; justify-content: center; align-items: center; gap: 3px; }
.spin svg { width: 13px; height: 13px; }
.flip { transform: rotate(180deg); }
.tap { width: 73px; background: var(--btn); color: #ddd; }
.tempo .slim { width: 31px; }
.outbox { width: 129px; }
.outbox i { margin-left: 37px; width: 1px; background: #55585b; }
```

FILE: app.js
```javascript
// Session data: colour, visibility name, track rows and the events on each lane.
const LANE_LEFT = 708, LANE_WIDTH = 1422;
const END = 2058;

const visibility = [
  ['Input/Output Channels', 'gray', 'fold'], ['Stereo Out', 'gray', 'stem'],
  ['Born To Be Wild_L', 'gray', 'sel'], ['Born To Be Wild_R', 'gray', 'sel'], ['Orig Mix', 'gray'],
  ['Vocals L', 'red', 'off'], ['Vocals R', 'red'], ['Vocals R (D)', 'red'], ['Vocals R (D)', 'red'],
  ['Vocal Delay', 'gray'], ['Rock Vox', 'gray'], ['Vocal Room', 'gray'], ['Vocal Reverb', 'gray'], ['Vocals', 'red'],
  ['Drums L', 'blue'], ['Drums L (D)', 'blue'], ['Drums R', 'blue'], ['Drums L Reverb', 'blue'], ['Drums', 'blue'],
  ['Guitar L', 'yellow'], ['Guitar R', 'yellow'], ['Guitar', 'yellow'],
  ['Bass L', 'green'], ['Bass R', 'green'], ['Bass', 'green'],
  ['Other L', 'purple'], ['Other R', 'purple'], ['Other', 'purple'], ['Organ Reverb', 'gray'],
  ['Non-Unmixed L', 'pink'], ['Non-Unmixed R', 'pink'], ['FX', 'magenta'],
];

const cuts = (...xs) => xs.slice(1).map((x, i) => [xs[i], x]);
const flat = (y) => ({ pts: [[0, y], [LANE_WIDTH, y]], stroke: '#b4bfca' });
const rel = (list) => list.map(([x, y]) => [x - LANE_LEFT, y]);

const rock = { fill: '#8a8f9444', stroke: '#9a9fa3', base: 36, pts: rel([[708, 13], [909, 13], [910, 12], [979, 12], [980, 13], [1070, 13], [1071, 12], [1159, 12], [1160, 13], [1510, 13], [1516, 9], [1520, 6], [1522, 6], [1526, 13], [1549, 13], [1549, 9], [1569, 9], [1569, 16], [1626, 16], [1626, 13], [1685, 13], [1685, 17], [1827, 17], [1827, 16], [1860, 16], [1860, 13], [2130, 13]]) };
const vox = { fill: '#c0808040', stroke: '#d98c8c', base: 36, pts: rel([[708, 11], [785, 11], [786, 9], [858, 9], [859, 11], [885, 11], [886, 9], [915, 9], [916, 11], [924, 11], [925, 9], [998, 9], [999, 11], [1067, 11], [1068, 9], [1159, 9], [1160, 11], [2130, 11]]) };
const panA = rel([[708, 10], [793, 10], [804, 31], [872, 31], [887, 4], [979, 4], [986, 31], [1347, 31], [1400, 18], [1420, 15], [1440, 4], [1486, 4], [1496, 31], [1868, 31], [1876, 4], [1966, 4], [1972, 31], [2130, 31]]);
const panB = panA.map(([x, y]) => [x, 36 - y]);
const pan = (pts) => ({ fill: '#b090c83c', stroke: '#b59bc9', base: 18, pts });

const tracks = [
  { n: 1, name: 'Born To Be Wild_L', c: 'gray', k: 'wave', hot: 1, amp: 4, clips: cuts(708, 725, 811, END) },
  { n: 2, name: 'Born To Be Wild_R', c: 'gray', k: 'wave', hot: 1, amp: 4, clips: cuts(708, 725, 800, END) },
  { n: 3, name: 'Orig Mix', c: 'gray', k: 'group', curve: flat(12) },
  { n: 5, name: 'Vocals R', c: 'red', k: 'wave', amp: 2, clips: [[708, 795, 'q'], [820, 840], [861, 915], [1003, 1022], ...cuts(1044, 1073, 1099, 1121, 1144), ...cuts(1160, 1258, 1346), [1346, 1460, 'w'], [1460, 1511, 'q'], [1526, 1552], ...cuts(1573, 1603, 1626), ...cuts(1688, 1733, 1749, 1784, 1873), [1873, END, 'w']] },
  { n: 6, name: 'Vocals R (D)', c: 'red', k: 'wave', amp: 2, clips: [[795, 820], [840, 861], ...cuts(915, 962, 976), [981, 1004], [1026, 1044], [1144, 1160], [1510, 1526], [1552, 1573], ...cuts(1626, 1648, 1688)] },
  { n: 7, name: 'Vocals R (D)', c: 'red', k: 'wave', amp: 2, clips: [[1346, 1360], [1873, 1917, 'q'], [1917, END, 'w']] },
  { n: 8, name: 'Vocal Delay', c: 'gray', k: 'fx', curve: flat(13) },
  { n: 9, name: 'Rock Vox', c: 'gray', k: 'fx', curve: rock },
  { n: 10, name: 'Vocal Room', c: 'gray', k: 'fx', curve: flat(15) },
  { n: 11, name: 'Vocal Reverb', c: 'gray', k: 'fx', curve: flat(18) },
  { n: 12, name: 'Vocals', c: 'red', k: 'group', curve: vox },
  { n: 13, name: 'Drums L', c: 'blue', k: 'wave', amp: 3, clips: cuts(708, 895, 904, 910, 920, END) },
  { n: 14, name: 'Drums L (D)', c: 'blue', k: 'wave', amp: 3, clips: cuts(708, 895, 904, 910, 920, END) },
  { n: 15, name: 'Drums R', c: 'blue', k: 'wave', amp: 1.5, clips: cuts(708, 809, END) },
  { n: 16, name: 'Drums L Reverb', c: 'blue', k: 'fx', curve: flat(14) },
  { n: 17, name: 'Drums', c: 'blue', k: 'group', curve: flat(12) },
  { n: 18, name: 'Guitar L', c: 'yellow', k: 'wave', amp: 1.2, clips: [[724, 754, 'q'], [789, 842], [877, 973], ...cuts(1055, 1095, 1146, 1223, 1236, 1363, 1444), [1508, 1891], ...cuts(1969, 1974, END)] },
  { n: 19, name: 'Guitar R', c: 'yellow', k: 'wave', amp: 1.2, clips: [[920, 979], ...cuts(1094, 1365, 1444), ...cuts(1531, 1877, 1972, END)] },
  { n: 20, name: 'Guitar', c: 'yellow', k: 'group', curve: flat(12) },
  { n: 21, name: 'Bass L', c: 'green', k: 'wave', amp: 1, clips: cuts(708, END) },
  { n: 22, name: 'Bass R', c: 'green', k: 'wave', amp: 1.2, clips: cuts(708, 811, END) },
  { n: 23, name: 'Bass', c: 'green', k: 'group', curve: flat(14) },
  { n: 24, name: 'Other L', c: 'purple', k: 'wave', amp: 1.4, clips: cuts(708, 803, 834, 879, 892, 964, 1107, 1357, 1404, 1438, 1492, 1877, 1967, END) },
  { n: 25, name: 'Other R', c: 'purple', k: 'wave', amp: 1.2, clips: cuts(708, 879, 893, 965, 1440, 1496, END) },
  { n: 26, name: 'Other', c: 'purple', k: 'group', curve: flat(12) },
  { auto: 'Mute', curve: flat(32) },
  { auto: 'Standard Panner - Pa.', curve: pan(panA) },
  { auto: 'Standard Panner - P.2', curve: pan(panB) },
  { n: 27, name: 'Organ Reverb', c: 'gray', k: 'fx', curve: flat(19) },
  { n: 28, name: 'Non-Unmixed L', c: 'pink', k: 'wave', amp: .3, clips: cuts(708, END) },
  { n: 29, name: 'Non-Unmixed R', c: 'pink', k: 'wave', amp: .3, clips: cuts(708, END) },
  { n: 30, name: 'FX', c: 'magenta', k: 'group', curve: flat(12) },
];

const icon = (id) => `<svg aria-hidden="true"><use href="#i-${id}"/></svg>`;
const colours = (c) => `--c:var(--c-${c});--r:var(--r-${c})`;
const pct = (v) => (v / LANE_WIDTH * 100).toFixed(3) + '%';

let seed = 7;
const rnd = () => (seed = (seed * 16807) % 2147483647) / 2147483647;

// Mirrored envelope around the middle of the clip.
function wavePath(x0, x1, amp, kind, colour) {
  const w = Math.max(4, x1 - x0 - 3), up = [], down = [];
  let swell = .8, tick = 0;
  for (let x = 3; x < w - 2; x += 2) {
    swell += (rnd() - .5) * .2;
    swell = Math.min(1.15, Math.max(.5, swell));
    let a = amp * swell * ((tick++ % 2 ? .95 : .6) + rnd() * .3);
    if (kind === 'w' || kind === 'q') a = x < 9 && x0 > 1000 ? 2.5 : .2;
    else if (colour === 'red' && Math.sin((x + x0) / 9) > .8) a = .3;
    if (colour === 'gray' && x0 === 811 && w - x < 14) a = w - x > 3 && w - x < 11 ? 13 - 2 * Math.abs(w - x - 7) : 2;
    up.push(`${x} ${(15 - a).toFixed(1)}`);
    down.unshift(`${x} ${(15 + a).toFixed(1)}`);
  }
  return up.length ? `M${up.join('L')}L${down.join('L')}Z` : '';
}

function clipHTML(t, [x0, x1, kind]) {
  const w = Math.max(4, x1 - x0 - 2);
  return `<div class="clip ${kind === 'w' ? 'white' : t.c}" style="left:${pct(x0 - LANE_LEFT)};width:${pct(x1 - x0 + 1)}${kind === 'w' || t.c === 'gray' ? '' : `;--c:var(--c-${t.c})`}"><svg viewBox="0 0 ${w} 30" preserveAspectRatio="none"><path d="${wavePath(x0, x1, t.amp, kind, t.c)}"/></svg></div>`;
}

function curveHTML({ pts, stroke, fill, base }) {
  const line = 'M' + pts.map((p) => p.join(' ')).join('L');
  const area = fill ? `<path d="${line}L${LANE_WIDTH} ${base}L0 ${base}Z" fill="${fill}"/>` : '';
  return `<svg viewBox="0 0 ${LANE_WIDTH} 36" preserveAspectRatio="none">${area}<path d="${line}" fill="none" stroke="${stroke}" stroke-width="2"/></svg>`;
}

document.getElementById('vis').innerHTML = visibility.map(([name, c, f]) => {
  const lead = f === 'fold' ? '<i class="fold"></i>' : f === 'stem' ? '<i class="stem"></i>' : '';
  return `<li class="${f === 'sel' ? 'sel-row' : ''}"><label><input type="checkbox" ${f === 'off' ? '' : 'checked'}><i class="bar" style="--c:var(--c-${c})"></i>${lead}<span class="name">${name}</span></label></li>`;
}).join('');

const ms = (second = 'S') => `<div class="ms"><button>M</button><button class="${second === 'D' ? 'd' : ''}">${second}</button></div>`;

document.getElementById('rows').innerHTML =
  `<div class="row header" style="${colours('gray')}"><div class="swatch">${icon('folder')}</div><span class="name">Input/Output Channels</span></div>` +
  `<div class="row sub" style="${colours('gray')}"><div class="swatch">${icon('out')}</div>${ms()}<span class="name">Stereo Out</span></div>` +
  tracks.map((t) => {
    if (t.auto) {
      const tail = t.auto === 'Mute' ? `<button class="mutebtn" aria-label="Mute value">${icon('mute')}</button>` : '<div class="rest"></div>';
      return `<div class="row sub auto" style="${colours('purple')}"><div class="swatch">${icon('curve')}</div><div class="ms"><button class="r">R</button><button>W</button></div><button class="p">P</button><div class="sel"><select aria-label="Parameter"><option>${t.auto}</option></select></div>${tail}<i class="edge"></i></div>`;
    }
    const mark = t.k === 'fx' ? '<span class="fx">FX</span>' : icon(t.k);
    return `<div class="row c-${t.c} ${t.hot ? 'hot' : ''}" style="${colours(t.c)}"><div class="swatch">${mark}<span class="num">${t.n}</span></div>${ms(t.k === 'fx' ? 'D' : 'S')}<span class="name">${t.name}</span></div>`;
  }).join('');

const bars = Array.from({ length: 14 }, (_, i) => i);
const barX = (i) => pct(i ? i * 102.9 - 1 : 0);
document.getElementById('ruler').innerHTML =
  bars.map((i) => `<span style="left:${barX(i)}">${i * 8 + 1}</span>`).join('') + '<i class="flag"></i><i class="flag r"></i>';

document.getElementById('lanes').innerHTML =
  bars.slice(1).map((i) => `<i class="gl" style="left:${barX(i)}"></i>`).join('') +
  `<div class="lane"></div><div class="lane">${curveHTML(flat(12))}</div>` +
  tracks.map((t) => `<div class="lane">${t.clips ? t.clips.map((c) => clipHTML(t, c)).join('') : curveHTML(t.curve)}</div>`).join('') +
  bars.slice(1).map((i) => `<i class="gl over" style="left:${barX(i)}"></i>`).join('') +
  '<i class="playhead"></i>';

document.getElementById('scale').innerHTML =
  [[60, 14], [50, 26], [40, 55], [30, 99], [24, 132], [18, 169], [12, 207], [6, 245], [0, 283]]
    .map(([v, x]) => `<span style="left:${(x / 303 * 100).toFixed(1)}%">${v}</span>`).join('');

// Level knob: tick ring, scalloped rim, red cap and pointer.
const ticks = Array.from({ length: 13 }, (_, i) => {
  const a = (-225 + i * 22.5) * Math.PI / 180;
  return `M${65 + 50 * Math.cos(a)} ${65 + 50 * Math.sin(a)}L${65 + 58 * Math.cos(a)} ${65 + 58 * Math.sin(a)}`;
}).join('');
const rim = Array.from({ length: 120 }, (_, i) => {
  const a = i * 3 * Math.PI / 180, r = 43 + .9 * Math.sin(i * Math.PI / 3);
  return `${(65 + r * Math.cos(a)).toFixed(1)} ${(65 + r * Math.sin(a)).toFixed(1)}`;
}).join('L');
document.getElementById('knob').innerHTML = `
  <defs><linearGradient id="cap" x1="0" y1="0" x2="1" y2="1"><stop offset="0" stop-color="#b0605c"/><stop offset=".45" stop-color="#9a3a38"/><stop offset="1" stop-color="#4e1c1c"/></linearGradient>
  <radialGradient id="shade"><stop offset=".6" stop-color="#000" stop-opacity=".7"/><stop offset="1" stop-color="#000" stop-opacity="0"/></radialGradient></defs>
  <circle cx="74" cy="75" r="52" fill="url(#shade)"/>
  <path d="${ticks}M29.600 100.400A50 50 0 1 1 100.400 100.400" fill="none" stroke="#5d6063" stroke-width="2"/>
  <path d="M${rim}Z" fill="#a9abad"/><circle cx="65" cy="65" r="37" fill="#1a0c0c"/><circle cx="65" cy="65" r="35" fill="url(#cap)"/>
  <path d="M86 61l11-3" stroke="#eee" stroke-width="4"/>
  <text x="65" y="71" text-anchor="middle" font-size="16" font-weight="700" fill="#e6e0e0">0.00</text>`;
```
